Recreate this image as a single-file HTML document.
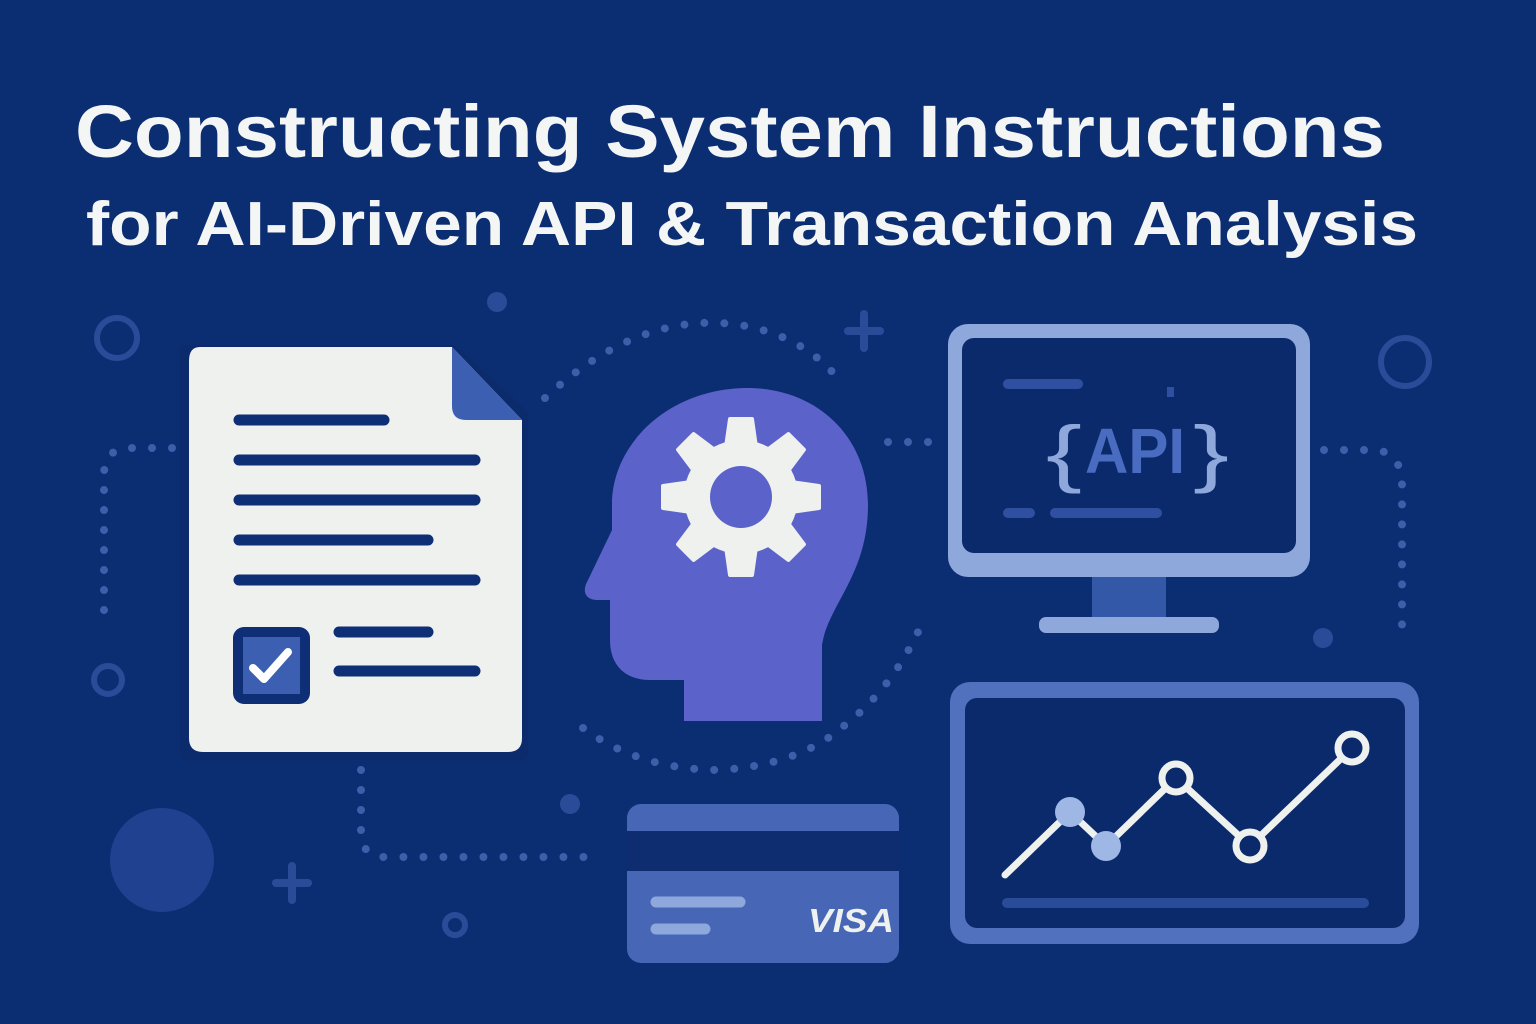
<!DOCTYPE html>
<html><head><meta charset="utf-8"><style>
html,body{margin:0;padding:0;width:1536px;height:1024px;overflow:hidden;background:#0b2d72}
svg{display:block}
</style></head><body>
<svg width="1536" height="1024" viewBox="0 0 1536 1024" xmlns="http://www.w3.org/2000/svg">
<rect width="1536" height="1024" fill="#0b2d72"/>
<g font-family="Liberation Sans, sans-serif" font-weight="bold" fill="#f4f5f5">
<text x="75" y="157" font-size="74" textLength="1310" lengthAdjust="spacingAndGlyphs">Constructing System Instructions</text>
<text x="86" y="245" font-size="62" textLength="1332" lengthAdjust="spacingAndGlyphs">for AI-Driven API &amp; Transaction Analysis</text>
</g>
<g fill="none" stroke="#2a4b98" stroke-width="6">
<circle cx="117" cy="338" r="20"/><circle cx="1405" cy="362" r="24"/><circle cx="108" cy="680" r="14"/><circle cx="455" cy="925" r="10"/>
</g>
<g fill="#2a4b98">
<circle cx="497" cy="302" r="10"/><circle cx="570" cy="804" r="10"/><circle cx="1323" cy="638" r="10"/>
<circle cx="162" cy="860" r="52" fill="#1f4190"/>
<rect x="844" y="327" width="40" height="8" rx="4"/><rect x="860" y="310" width="8" height="42" rx="4"/>
<rect x="272" y="879" width="40" height="8" rx="4"/><rect x="288" y="862" width="8" height="42" rx="4"/>
</g>
<g fill="none" stroke="#3d5ea9" stroke-width="8" stroke-linecap="round" stroke-dasharray="0 20">
<path d="M172 448 L124 448 Q104 452 104 475 L104 612"/>
<path d="M545 398 Q640 310 740 325 Q800 335 835 375"/>
<path d="M888 442 L945 442"/>
<path d="M1324 450 L1378 450 Q1400 455 1402 480 L1402 640"/>
<path d="M583 728 Q640 770 720 770 Q800 765 845 725 Q890 690 918 632"/>
<path d="M361 770 L361 835 Q363 857 385 857 L602 857"/>
</g>
<path d="M185 345 L455 345 L528 412 L528 752 Q528 760 520 760 L185 760 Q180 760 180 752 L180 352 Q180 345 185 345Z" fill="#0c2b6c"/>
<path d="M200 347 L452 347 L522 420 L522 738 Q522 752 508 752 L203 752 Q189 752 189 738 L189 361 Q189 347 200 347Z" fill="#eff1ef"/>
<path d="M452 347 L522 420 L466 420 Q452 420 452 406Z" fill="#3c5fb1"/>
<g stroke="#0e2e76" stroke-width="11" stroke-linecap="round">
<line x1="239" y1="420" x2="384" y2="420"/><line x1="239" y1="460" x2="475" y2="460"/><line x1="239" y1="500" x2="475" y2="500"/>
<line x1="239" y1="540" x2="428" y2="540"/><line x1="239" y1="580" x2="475" y2="580"/>
<line x1="339" y1="632" x2="428" y2="632"/><line x1="339" y1="671" x2="475" y2="671"/>
</g>
<rect x="233" y="627" width="77" height="77" rx="11" fill="#0e2e76"/>
<rect x="243" y="637" width="57" height="57" fill="#3c5fb1"/>
<path d="M253 668 L264 679 L288 652" fill="none" stroke="#fff" stroke-width="8" stroke-linecap="round" stroke-linejoin="round"/>
<path d="M684 721 L822 721 L822 645 C828 605 868 575 868 505 C868 435 815 388 748 388 C672 388 615 440 612 500 L612 530 L588 580 C581 592 586 600 598 600 L610 600 L610 640 C610 665 625 680 650 680 L684 680 Z" fill="#5b62c9"/>
<g fill="#eff1ef" transform="translate(741,497)">
<g id="t"><path d="M-11 -78 L11 -78 L15 -50 L-15 -50 Z" stroke="#eff1ef" stroke-width="4" stroke-linejoin="round"/></g>
<use href="#t" transform="rotate(45)"/><use href="#t" transform="rotate(90)"/><use href="#t" transform="rotate(135)"/>
<use href="#t" transform="rotate(180)"/><use href="#t" transform="rotate(225)"/><use href="#t" transform="rotate(270)"/><use href="#t" transform="rotate(315)"/>
<circle r="57"/>
<circle r="31" fill="#5b62c9"/>
</g>
<rect x="1092" y="575" width="74" height="45" fill="#3458a8"/>
<rect x="1039" y="617" width="180" height="16" rx="7" fill="#8ea8dc"/>
<rect x="948" y="324" width="362" height="253" rx="20" fill="#8ea8dc"/>
<rect x="962" y="338" width="334" height="215" rx="12" fill="#0b2a6b"/>
<g stroke="#2f50a0" stroke-width="10" stroke-linecap="round">
<line x1="1008" y1="384" x2="1078" y2="384"/><line x1="1008" y1="513" x2="1030" y2="513"/><line x1="1055" y1="513" x2="1157" y2="513"/>
</g>
<rect x="1167" y="387" width="7" height="10" fill="#2f50a0"/>
<text x="1046" y="478" font-family="Liberation Sans, sans-serif" font-size="74" fill="#8ea8dc" textLength="36" lengthAdjust="spacingAndGlyphs">{</text>
<text x="1085" y="473" font-family="Liberation Sans, sans-serif" font-weight="bold" font-size="64" fill="#4a6cc0" textLength="100" lengthAdjust="spacingAndGlyphs">API</text>
<text x="1193" y="478" font-family="Liberation Sans, sans-serif" font-size="74" fill="#8ea8dc" textLength="36" lengthAdjust="spacingAndGlyphs">}</text>
<rect x="950" y="682" width="469" height="262" rx="20" fill="#5171be"/>
<rect x="965" y="698" width="440" height="230" rx="12" fill="#0b2a6b"/>
<rect x="1002" y="898" width="367" height="10" rx="5" fill="#2a4b98"/>
<polyline points="1005,875 1070,812 1106,846 1176,778 1250,846 1352,748" fill="none" stroke="#eff1ef" stroke-width="7" stroke-linecap="round" stroke-linejoin="round"/>
<circle cx="1070" cy="812" r="15" fill="#9fb7e4"/>
<circle cx="1106" cy="846" r="15" fill="#9fb7e4"/>
<g fill="#0b2a6b" stroke="#eff1ef" stroke-width="7"><circle cx="1176" cy="778" r="14"/><circle cx="1250" cy="846" r="14"/><circle cx="1352" cy="748" r="14"/></g>
<rect x="627" y="804" width="272" height="159" rx="14" fill="#4767b6"/>
<rect x="627" y="831" width="272" height="40" fill="#0e2c70"/>
<g stroke="#8ea8dc" stroke-width="11" stroke-linecap="round"><line x1="656" y1="902" x2="740" y2="902"/><line x1="656" y1="929" x2="705" y2="929"/></g>
<text x="808" y="932" font-family="Liberation Sans, sans-serif" font-weight="bold" font-style="italic" font-size="33" fill="#eff1ef" textLength="86" lengthAdjust="spacingAndGlyphs">VISA</text>
</svg>
</body></html>
